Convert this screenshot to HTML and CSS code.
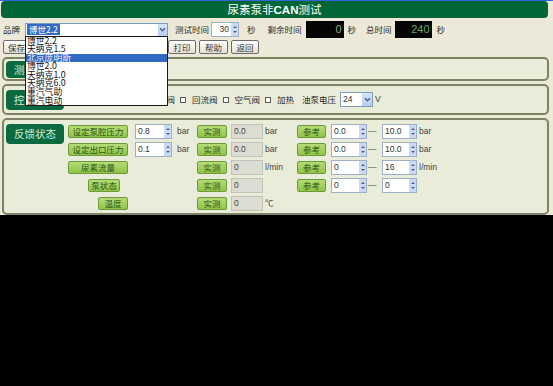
FILE: index.html
```html
<!DOCTYPE html>
<html lang="zh">
<head>
  <meta charset="UTF-8">
  <title>尿素泵非CAN测试</title>
  <link rel="stylesheet" href="styles.css">
</head>
<body>
  <div class="app">
    <div class="titlebar">尿素泵非<b>CAN</b>测试</div>

    <div class="toolbar">
      <span class="lbl">品牌</span>
      <div class="combo brand">
        <span class="combo-text"><span class="picked">博世2.2</span></span>
        <span class="combo-btn"><svg width="7" height="5" viewBox="0 0 7 5"><path d="M1 1.2 L3.5 3.8 L6 1.2" stroke="#4d6185" stroke-width="1.4" fill="none"/></svg></span>
        <ul class="droplist">
          <li>博世2.2</li>
          <li>天纳克1.5</li>
          <li class="hot">北京庞明斯</li>
          <li>博世2.0</li>
          <li>天纳克1.0</li>
          <li>天纳克6.0</li>
          <li>重汽气助</li>
          <li>重汽电动</li>
        </ul>
      </div>
      <span class="lbl test-time">测试时间</span>
      <div class="spin time-spin"><span class="spin-val">30</span><span class="spin-btn"></span></div>
      <span class="lbl sec">秒</span>
      <span class="lbl remain">剩余时间</span>
      <div class="lcd">0</div>
      <span class="lbl sec-2">秒</span>
      <span class="lbl total">总时间</span>
      <div class="lcd lcd-total">240</div>
      <span class="lbl sec-3">秒</span>
    </div>

    <div class="btnrow">
      <button class="btn w-save">保存</button>
      <button class="btn w-wide">读取参数</button>
      <button class="btn w-wide">开始测试</button>
      <button class="btn w-wide">停止测试</button>
      <button class="btn w-print">打印</button>
      <button class="btn w-help">帮助</button>
      <button class="btn w-back">返回</button>
    </div>

    <section class="panel panel-test">
      <div class="tag tag-small">测试参数</div>
    </section>

    <section class="panel panel-ctrl">
      <div class="tag">控制输出</div>
      <div class="checks">
        <label class="check"><span class="box"></span>泵电机启动</label>
        <label class="check"><span class="box"></span>喷射阀</label>
        <label class="check"><span class="box"></span>回流阀</label>
        <label class="check"><span class="box"></span>空气阀</label>
        <label class="check"><span class="box"></span>加热</label>
      </div>
      <span class="lbl oil">油泵电压</span>
      <div class="combo volt">
        <span class="combo-text">24</span>
        <span class="combo-btn"><svg width="7" height="5" viewBox="0 0 7 5"><path d="M1 1.2 L3.5 3.8 L6 1.2" stroke="#4d6185" stroke-width="1.4" fill="none"/></svg></span>
      </div>
      <span class="unit volt-unit">V</span>
    </section>

    <section class="panel panel-feed">
      <div class="tag">反馈状态</div>
      <div class="feed">
        <div class="frow">
          <span class="gbtn c-set">设定泵腔压力</span>
          <div class="spin c-setval"><span class="spin-val">0.8</span><span class="spin-btn"></span></div>
          <span class="unit c-u1">bar</span>
          <span class="gbtn c-meas">实测</span>
          <span class="ro c-measval">0.0</span>
          <span class="unit c-u2">bar</span>
          <span class="gbtn c-ref">参考</span>
          <div class="spin c-lo"><span class="spin-val">0.0</span><span class="spin-btn"></span></div>
          <span class="dash c-dash">—</span>
          <div class="spin c-hi"><span class="spin-val">10.0</span><span class="spin-btn"></span></div>
          <span class="unit c-u3">bar</span>
        </div>
        <div class="frow">
          <span class="gbtn c-set">设定出口压力</span>
          <div class="spin c-setval"><span class="spin-val">0.1</span><span class="spin-btn"></span></div>
          <span class="unit c-u1">bar</span>
          <span class="gbtn c-meas">实测</span>
          <span class="ro c-measval">0.0</span>
          <span class="unit c-u2">bar</span>
          <span class="gbtn c-ref">参考</span>
          <div class="spin c-lo"><span class="spin-val">0.0</span><span class="spin-btn"></span></div>
          <span class="dash c-dash">—</span>
          <div class="spin c-hi"><span class="spin-val">10.0</span><span class="spin-btn"></span></div>
          <span class="unit c-u3">bar</span>
        </div>
        <div class="frow">
          <span class="gbtn c-set">尿素流量</span>
          <span class="gbtn c-meas">实测</span>
          <span class="ro c-measval">0</span>
          <span class="unit c-u2">l/min</span>
          <span class="gbtn c-ref">参考</span>
          <div class="spin c-lo"><span class="spin-val">0</span><span class="spin-btn"></span></div>
          <span class="dash c-dash">—</span>
          <div class="spin c-hi"><span class="spin-val">16</span><span class="spin-btn"></span></div>
          <span class="unit c-u3">l/min</span>
        </div>
        <div class="frow">
          <span class="gbtn c-set pump">泵状态</span>
          <span class="gbtn c-meas">实测</span>
          <span class="ro c-measval">0</span>
          <span class="gbtn c-ref">参考</span>
          <div class="spin c-lo"><span class="spin-val">0</span><span class="spin-btn"></span></div>
          <span class="dash c-dash">—</span>
          <div class="spin c-hi"><span class="spin-val">0</span><span class="spin-btn"></span></div>
        </div>
        <div class="frow">
          <span class="gbtn c-set temp">温度</span>
          <span class="gbtn c-meas">实测</span>
          <span class="ro c-measval">0</span>
          <span class="unit c-u2">℃</span>
        </div>
      </div>
    </section>
  </div>
</body>
</html>
```

FILE: styles.css
```css
* {
  box-sizing: border-box;
}
body {
  margin: 0;
  background: #000;
  font-family: "Noto Sans CJK SC", "Liberation Sans", sans-serif;
  font-size: 8.5px;
  color: #2b2b2b;
}
.app {
  height: 215px;
  background: #ece9d8;
  border-top: 1px solid #3265d6;
  display: flex;
  flex-direction: column;
}
.titlebar {
  height: 17px;
  margin: 0 5px 0 1px;
  background: #036637;
  border-radius: 4px;
  color: #fff;
  font-size: 11.5px;
  line-height: 17px;
  text-align: center;
}
.titlebar b {
  font-family: "Liberation Sans", sans-serif;
}

/* top toolbar */
.toolbar {
  display: flex;
  align-items: center;
  height: 17px;
  margin-top: 3px;
  padding-left: 3px;
}
.lbl {
  line-height: 1;
  white-space: nowrap;
}
.combo {
  position: relative;
  display: flex;
  height: 14px;
  background: #fff;
  border: 1px solid #7f9db9;
}
.brand {
  width: 143px;
  margin-left: 5px;
}
.combo-text {
  flex: 1;
  display: flex;
  align-items: center;
  padding-left: 1px;
  line-height: 1;
  font-family: "Liberation Sans", "Noto Sans CJK SC", sans-serif;
}
.picked {
  background: #316ac5;
  color: #fff;
  padding: 1px 2px;
  font-family: "Noto Sans CJK SC", sans-serif;
}
.combo-btn {
  width: 9px;
  display: flex;
  align-items: center;
  justify-content: center;
  background: linear-gradient(#d6e3fb, #b7cdf4);
}
.droplist {
  position: absolute;
  left: -1px;
  top: 12px;
  width: 143px;
  margin: 0;
  padding: 0;
  list-style: none;
  background: #fff;
  border: 1px solid #1a1a1a;
  z-index: 5;
}
.droplist li {
  height: 8.6px;
  line-height: 8.6px;
  font-size: 8.8px;
  padding-left: 1px;
  color: #111;
}
.droplist li.hot {
  background: #316ac5;
  color: #e8eefc;
}
.test-time { margin-left: 7px; }
.time-spin {
  width: 28px;
  margin-left: 2px;
}
.time-spin .spin-val {
  text-align: right;
  padding-right: 2px;
}
.sec { margin-left: 8px; }
.remain { margin-left: 12px; }
.lcd {
  width: 38px;
  height: 17px;
  margin-left: 4px;
  background: #050505;
  color: #86ab86;
  font-family: "Liberation Sans", sans-serif;
  font-size: 11px;
  line-height: 17px;
  text-align: right;
  padding-right: 2px;
}
.sec-2 { margin-left: 4px; }
.total { margin-left: 10px; }
.lcd-total {
  width: 37px;
  margin-left: 3px;
  color: #62a862;
}
.sec-3 { margin-left: 5px; }

/* spin boxes */
.spin {
  display: flex;
  height: 15px;
  background: #fff;
  border: 1px solid #9db0c8;
}
.spin-val {
  flex: 1;
  padding-left: 2px;
  line-height: 13px;
  font-family: "Liberation Sans", sans-serif;
  font-size: 8.5px;
  color: #333;
}
.spin-btn {
  position: relative;
  width: 7px;
  background: #cbd9f5;
}
.spin-btn::before,
.spin-btn::after {
  content: "";
  position: absolute;
  left: 1.5px;
  border-left: 2px solid transparent;
  border-right: 2px solid transparent;
}
.spin-btn::before {
  top: 3px;
  border-bottom: 2px solid #4a5f8a;
}
.spin-btn::after {
  bottom: 3px;
  border-top: 2px solid #4a5f8a;
}

/* button row */
.btnrow {
  display: flex;
  gap: 3px;
  height: 15px;
  margin-top: 1px;
  padding: 1px 0 0 3px;
}
.btn {
  height: 14px;
  padding: 0;
  font-family: "Noto Sans CJK SC", sans-serif;
  font-size: 8.5px;
  line-height: 12px;
  color: #333;
  background: linear-gradient(#fdfdfb, #e4e1d5);
  border: 1px solid #6c6c6c;
  border-radius: 2px;
}
.w-save { width: 27px; }
.w-wide { width: 42px; }
.w-print { width: 28px; }
.w-help { width: 29px; }
.w-back { width: 28px; }

/* group panels */
.panel {
  display: flex;
  margin: 0 4px 0 2px;
  background: #e9ecd9;
  border: 2px solid #7d8463;
  border-radius: 5px;
}
.panel-test {
  height: 24px;
  margin-top: 3px;
}
.panel-ctrl {
  height: 31px;
  margin-top: 3px;
  align-items: center;
}
.panel-feed {
  height: 97px;
  margin-top: 3px;
  align-items: flex-start;
}
.tag {
  width: 58px;
  height: 20px;
  margin-left: 2px;
  background: #0b6a40;
  border-radius: 4px;
  color: #d4eedd;
  font-size: 10.5px;
  line-height: 20px;
  text-align: center;
}
.tag-small {
  height: 17px;
  margin-top: 2px;
  line-height: 17px;
}
.panel-ctrl .tag {
  margin-top: 1px;
}
.panel-feed .tag {
  margin-top: 4px;
}
.checks {
  display: flex;
  margin-left: 14px;
}
.check {
  display: flex;
  align-items: center;
  margin-right: 5px;
  line-height: 1;
  white-space: nowrap;
}
.box {
  width: 6px;
  height: 6px;
  margin-right: 6px;
  background: #fff;
  border: 1px solid #5c5c5c;
}
.oil { margin-left: 3px; }
.volt {
  width: 33px;
  height: 15px;
  margin-left: 4px;
}
.volt .combo-text {
  padding-left: 2px;
  color: #333;
}
.volt .combo-btn { width: 10px; }
.volt-unit { margin-left: 2px; }

/* feedback table */
.feed {
  margin: 4px 0 0 4px;
}
.frow {
  display: grid;
  grid-template-columns: 67px 41px 21px 34px 34px 32px 34px 37px 14px 37px auto;
  align-items: center;
  height: 15px;
  margin-bottom: 3px;
}
.gbtn {
  height: 13px;
  background: linear-gradient(#b4dc75, #92c447);
  border: 1px solid #6b9a3a;
  border-radius: 2px;
  color: #2a561a;
  line-height: 11px;
  text-align: center;
  white-space: nowrap;
}
.unit {
  font-family: "Liberation Sans", "Noto Sans CJK SC", sans-serif;
  font-size: 8.5px;
  color: #444;
  line-height: 1;
}
.ro {
  height: 15px;
  background: #dcdcd3;
  border: 1px solid #c3c3ba;
  padding-left: 2px;
  font-family: "Liberation Sans", sans-serif;
  line-height: 13px;
  color: #444;
}
.dash {
  font-family: "Liberation Sans", sans-serif;
  color: #444;
  line-height: 1;
}
.c-set { grid-column: 1; width: 60px; }
.c-set.pump { width: 32px; margin-left: 20px; }
.c-set.temp { width: 30px; margin-left: 30px; }
.c-setval { grid-column: 2; width: 37px; }
.c-u1 { grid-column: 3; margin-left: 1px; }
.c-meas { grid-column: 4; width: 30px; }
.c-measval { grid-column: 5; width: 32px; }
.c-u2 { grid-column: 6; }
.c-ref { grid-column: 7; width: 29px; }
.c-lo { grid-column: 8; width: 36px; }
.c-dash { grid-column: 9; }
.c-hi { grid-column: 10; width: 35px; }
.c-u3 { grid-column: 11; }
```
